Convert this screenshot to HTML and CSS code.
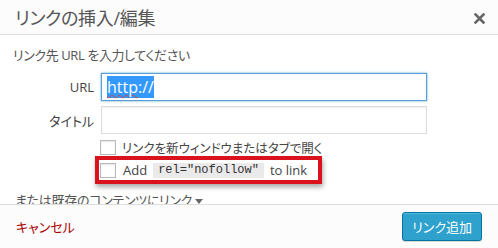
FILE: index.html
```html
<!DOCTYPE html>
<html lang="ja">
<head>
  <meta charset="UTF-8" />
  <meta name="viewport" content="width=device-width, initial-scale=1.0" />
  <title>リンクの挿入/編集</title>
  <link rel="stylesheet" href="styles.css">
</head>
<body>

  <div class="dialog">
    <div class="dialog-header">
      <h1>リンクの挿入/編集</h1>
      <span class="close" title="閉じる">
        <svg width="11" height="11" viewBox="0 0 11 11">
          <path d="M1.5 1.5 L9.5 9.5 M9.5 1.5 L1.5 9.5" stroke="#666" stroke-width="2.6" stroke-linecap="square" />
        </svg>
      </span>
    </div>

    <div class="dialog-body">
      <p class="intro">リンク先 URL を入力してください</p>

      <div class="fields">
        <label for="url">URL</label>
        <div class="field focused" id="url"><span class="sel"><span class="typo">http</span>://</span></div>

        <label for="linkTitle">タイトル</label>
        <div class="field" id="linkTitle"></div>
      </div>

      <div class="options">
        <label class="option">
          <input type="checkbox" />
          <span>リンクを新ウィンドウまたはタブで開く</span>
        </label>
        <label class="option marked">
          <input type="checkbox" />
          <span class="latin">Add</span>
          <code>rel="nofollow"</code>
          <span class="latin">to link</span>
        </label>
      </div>

      <p class="existing">または既存のコンテンツにリンク <span class="caret"></span></p>
    </div>

    <div class="dialog-footer">
      <a href="#" class="cancel">キャンセル</a>
      <button class="button-primary">リンク追加</button>
    </div>
  </div>

</body>
</html>
```

FILE: styles.css
```css
body {
  margin: 0;
  background: #fff;
  color: #444;
  font-family: 'Open Sans', 'Noto Sans CJK JP', sans-serif;
  font-feature-settings: "palt";
}
.dialog {
  width: 498px;
  height: 248px;
  display: flex;
  flex-direction: column;
}
.dialog-header {
  height: 34px;
  border-bottom: 1px solid #ddd;
  background: #fcfcfc;
  display: flex;
  align-items: center;
  justify-content: space-between;
  padding: 0 13px 0 15px;
}
h1 {
  margin: 0;
  font-size: 18px;
  font-weight: normal;
  color: #555;
  letter-spacing: -0.3px;
}
.close {
  display: flex;
  padding-top: 2px;
}
.dialog-body {
  height: 169px;
  box-sizing: border-box;
  overflow: hidden;
  padding: 11px 0 0 13px;
  font-size: 13px;
}
.intro {
  margin: 0 0 9px;
  line-height: 18px;
  color: #555;
  letter-spacing: -0.4px;
}
.fields {
  display: grid;
  grid-template-columns: 81px 326px;
  column-gap: 7px;
  row-gap: 5px;
  align-items: center;
}
.fields label {
  text-align: right;
  font-size: 13px;
}
.field {
  height: 28px;
  box-sizing: border-box;
  border: 1px solid #ddd;
  box-shadow: inset 0 1px 2px rgba(0,0,0,0.07);
  background: #fff;
  padding: 4px 5px;
  font-size: 16px;
  line-height: 18px;
}
.field.focused {
  border-color: #5b9dd9;
  box-shadow: 0 0 2px rgba(30,140,190,0.8);
}
.sel {
  background: #3399ff;
  color: #fff;
}
.typo {
  text-decoration: underline wavy #c44;
  text-decoration-thickness: 1px;
}
.options {
  padding: 6px 0 0 87px;
}
.option {
  display: flex;
  align-items: center;
  gap: 6px;
  height: 15px;
  font-size: 12.5px;
}
.option input {
  appearance: none;
  margin: 0;
  width: 16px;
  height: 15px;
  border: 1px solid #b4b9be;
  background: #fff;
  box-shadow: inset 0 1px 2px rgba(0,0,0,0.1);
}
.option.marked {
  width: fit-content;
  height: 20px;
  margin: 1px 0 0 -5px;
  padding: 0 11px 0 1px;
  border: 4px solid #d9121d;
  box-shadow: 1px 3px 5px rgba(0,0,0,0.35);
  gap: 0;
}
.latin {
  font-size: 13px;
  margin-left: 7px;
}
code {
  margin-left: 6px;
  padding: 0 5px;
  background: #eaeaea;
  font-family: 'Liberation Mono', monospace;
  font-size: 12px;
  line-height: 15px;
  color: #333;
}
code + .latin {
  margin-left: 6px;
}
.existing {
  margin: 8px 0 0 2px;
  line-height: 16px;
  color: #555;
  letter-spacing: -0.3px;
}
.caret {
  display: inline-block;
  border: 4px solid transparent;
  border-top: 5px solid #666;
  border-bottom: 0;
  vertical-align: middle;
}
.dialog-footer {
  flex: 1;
  border-top: 1px solid #ddd;
  background: #fcfcfc;
  display: flex;
  align-items: center;
  justify-content: space-between;
  padding: 0 16px 0 16px;
}
.cancel {
  color: #a00;
  text-decoration: none;
  font-size: 13px;
}
.button-primary {
  height: 29px;
  padding: 0 9px;
  border: 1px solid #0074a2;
  border-radius: 3px;
  background: #2ea2cc;
  box-shadow: inset 0 1px 0 rgba(120,200,230,0.5), 0 1px 0 rgba(0,0,0,0.15);
  color: #fff;
  font-family: inherit;
  font-size: 13px;
  font-feature-settings: "palt";
}
```
